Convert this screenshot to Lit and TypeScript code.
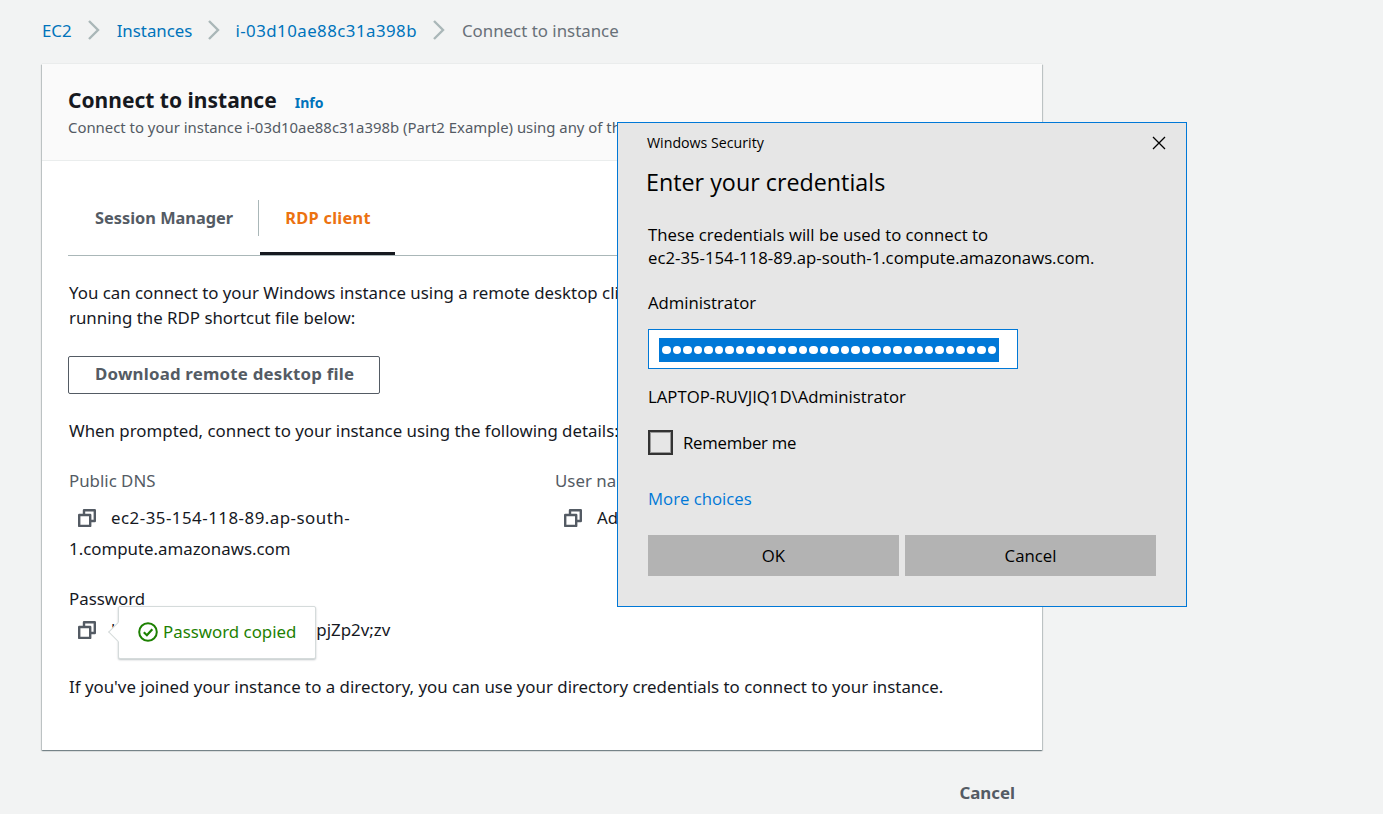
import { LitElement, html, css, svg } from "lit";
import { customElement } from "lit/decorators.js";

const copyIcon = html`<svg class="copy" width="18" height="18" viewBox="0 0 18 18" fill="none" stroke="#545b64" stroke-width="2.4" stroke-linejoin="round"><rect x="1.2" y="6" width="11" height="11"/><path d="M6 5V1.2H16.8V12H13"/></svg>`;
const chevron = html`<svg class="chev" width="14" height="20" viewBox="0 0 14 20" fill="none" stroke="#aab7b8" stroke-width="2.4"><path d="M2 1L11 10L2 19"/></svg>`;
const check = svg`<circle cx="10" cy="10" r="8.8" stroke-width="2"/><path d="M5.8 10.2L8.9 13.2L14.3 7.2" stroke-width="2.2"/>`;

@customElement("app-root")
export class AppRoot extends LitElement {
  static styles = css`
    :host { display: block; position: relative; width: 1383px; height: 814px; overflow: hidden; background: #f2f3f3; font-family: "Noto Sans", "Liberation Sans", sans-serif; font-size: 16.85px; color: #16191f; }
    a { color: #0073bb; text-decoration: none; }
    .crumbs { display: flex; align-items: center; height: 20px; padding: 20px 0 0 42px; color: #687078; }
    .chev { margin: 0 16px 0 15px; }
    .crumb-id { letter-spacing: .45px; margin-left: -2px; }
    .page { width: 1000px; margin: 24px 0 0 42px; }
    .card { background: #fff; box-shadow: 0 1px 1px 0 rgba(0,28,36,.3), 1px 1px 1px 0 rgba(0,28,36,.15), -1px 1px 1px 0 rgba(0,28,36,.15), 0 0 1px rgba(0,28,36,.2); height: 686px; }
    .head { background: #fafafa; border-bottom: 1px solid #eaeded; height: 97px; box-sizing: border-box; padding: 22px 26px 0; }
    .title { display: flex; align-items: baseline; gap: 18px; font-size: 21px; font-weight: 700; line-height: 28px; }
    .title a { font-size: 14px; }
    .desc { font-size: 14.9px; color: #545b64; line-height: 20px; white-space: nowrap; }
    .body { padding: 39px 26px 0; }
    .tabs { display: flex; border-bottom: 1px solid #aab7b8; height: 56px; box-sizing: border-box; }
    .tab { position: relative; font-weight: 700; font-size: 16.35px; line-height: 36px; height: 36px; color: #545b64; padding: 0 25px 0 27px; }
    .tab.on { color: #ec7211; border-left: 1px solid #aab7b8; padding: 0 24px 0 26px; letter-spacing: .3px; }
    .tab.on::after { content: ""; position: absolute; left: 1px; right: 0; top: 52px; height: 3px; background: #16191f; }
    .content { padding: 0 1px; }
    p { margin: 0; line-height: 24px; }
    .p1 { margin-top: 24px; line-height: 25px; }
    .btn { display: block; margin: 26px 0 0 -1px; border: 1px solid #545b64; border-radius: 2px; background: #fff; color: #545b64; font: inherit; font-weight: 700; letter-spacing: .2px; padding: 0 26px 4px; height: 38px; box-sizing: border-box; width: 312px; text-align: left; white-space: nowrap; }
    .p2 { margin-top: 25px; }
    .grid { display: grid; grid-template-columns: 486px 1fr; margin-top: 26px; }
    .label { color: #545b64; line-height: 24px; }
    .val { margin-top: 9px; line-height: 31px; width: 300px; }
    .first { letter-spacing: .5px; }
    .copy { vertical-align: -3px; margin: 0 15px 0 9px; }
    .pw { margin-top: 23px; position: relative; }
    .pw .label { color: #16191f; }
    .pwval { line-height: 34px; margin-top: 2px; height: 34px; white-space: nowrap; }
    .pwval .rest { margin-left: 201px; }
    .tip { position: absolute; left: 49px; top: 19px; width: 198px; height: 53px; box-sizing: border-box; background: #fff; border: 1px solid #d5dbdb; border-radius: 2px; box-shadow: 0 1px 2px rgba(0,28,36,.25); color: #1d8102; display: flex; align-items: center; gap: 5px; padding: 0 0 1px 19px; }
    .tip::before { content: ""; position: absolute; left: -8px; top: 18px; width: 14px; height: 14px; box-sizing: border-box; background: #fff; border-left: 1px solid #d5dbdb; border-bottom: 1px solid #d5dbdb; transform: rotate(45deg); }
    .tip svg { flex: none; position: relative; }
    .tip span { position: relative; top: -1px; }
    .p3 { margin-top: 28px; }
    .foot { display: flex; justify-content: flex-end; padding: 31px 27px 0 0; font-weight: 700; color: #545b64; line-height: 24px; }
    .win { position: absolute; left: 617px; top: 122px; width: 570px; height: 485px; box-sizing: border-box; background: #e6e6e6; border: 1px solid #0078d7; font-family: "Open Sans", "Liberation Sans", sans-serif; font-size: 16.75px; color: #000; padding: 0 30px; }
    .wt { font-size: 14.2px; line-height: 20px; padding-top: 10px; margin-left: -1px; }
    .x { position: absolute; right: 20px; top: 13px; }
    h2 { margin: 13px 0 0 -2px; font-weight: 400; font-size: 23.3px; line-height: 32px; }
    .w1 { line-height: 23px; margin-top: 25px; }
    .w2 { line-height: 24px; margin-top: 22px; }
    .input { margin-top: 14px; width: 370px; height: 40px; box-sizing: border-box; background: #fff; border: 1px solid #0078d7; padding: 8px 10px; }
    .sel { display: flex; align-items: center; justify-content: center; width: 340px; height: 24px; background: #0078d7; }
    .dot { width: 8.5px; height: 8.5px; margin: 0 1px; border-radius: 50%; background: #fff; flex: none; }
    .w3 { line-height: 24px; margin-top: 16px; }
    .remember { display: flex; align-items: center; gap: 10px; margin-top: 21px; letter-spacing: -.25px; }
    .box { width: 25px; height: 25px; box-sizing: border-box; border: 2px solid #333; background: #e6e6e6; box-shadow: inset 0 0 0 1px #999; }
    .more { display: block; margin-top: 32px; color: #0078d7; line-height: 24px; }
    .btns { display: grid; grid-template-columns: 251px 251px; gap: 6px; margin-top: 24px; }
    .wb { height: 41px; background: #b3b3b3; text-align: center; line-height: 41px; }
  `;

  render() {
    return html`
      <nav class="crumbs">
        <a href="#">EC2</a>${chevron}<a href="#">Instances</a>${chevron}<a class="crumb-id" href="#">i-03d10ae88c31a398b</a>${chevron}<span>Connect to instance</span>
      </nav>
      <div class="page">
        <section class="card">
          <header class="head">
            <div class="title">Connect to instance <a href="#">Info</a></div>
            <div class="desc">Connect to your instance i-03d10ae88c31a398b (Part2 Example) using any of these options</div>
          </header>
          <div class="body">
            <div class="tabs"><div class="tab">Session Manager</div><div class="tab on">RDP client</div></div>
            <div class="content">
              <p class="p1">You can connect to your Windows instance using a remote desktop client of your choice, and by downloading and<br />running the RDP shortcut file below:</p>
              <button class="btn">Download remote desktop file</button>
              <p class="p2">When prompted, connect to your instance using the following details:</p>
              <div class="grid">
                <div><div class="label">Public DNS</div><div class="val">${copyIcon}<span class="first">ec2-35-154-118-89.ap-south-</span>1.compute.amazonaws.com</div></div>
                <div><div class="label">User name</div><div class="val">${copyIcon}Administrator</div></div>
              </div>
              <div class="pw">
                <div class="label">Password</div>
                <div class="pwval">${copyIcon}l<span class="rest">pjZp2v;zv</span></div>
                <div class="tip"><svg width="20" height="20" viewBox="0 0 20 20" fill="none" stroke="#1d8102">${check}</svg><span>Password copied</span></div>
              </div>
              <p class="p3">If you've joined your instance to a directory, you can use your directory credentials to connect to your instance.</p>
            </div>
          </div>
        </section>
        <div class="foot">Cancel</div>
      </div>
      <div class="win">
        <div class="wt">Windows Security</div>
        <svg class="x" width="14" height="14" viewBox="0 0 14 14" stroke="#000" stroke-width="1.3"><path d="M1 1L13 13M13 1L1 13"/></svg>
        <h2>Enter your credentials</h2>
        <div class="w1">These credentials will be used to connect to<br />ec2-35-154-118-89.ap-south-1.compute.amazonaws.com.</div>
        <div class="w2">Administrator</div>
        <div class="input"><div class="sel">${Array.from({ length: 32 }, () => html`<i class="dot"></i>`)}</div></div>
        <div class="w3">LAPTOP-RUVJIQ1D\\Administrator</div>
        <div class="remember"><span class="box"></span>Remember me</div>
        <a class="more" href="#">More choices</a>
        <div class="btns"><div class="wb">OK</div><div class="wb">Cancel</div></div>
      </div>
    `;
  }
}
